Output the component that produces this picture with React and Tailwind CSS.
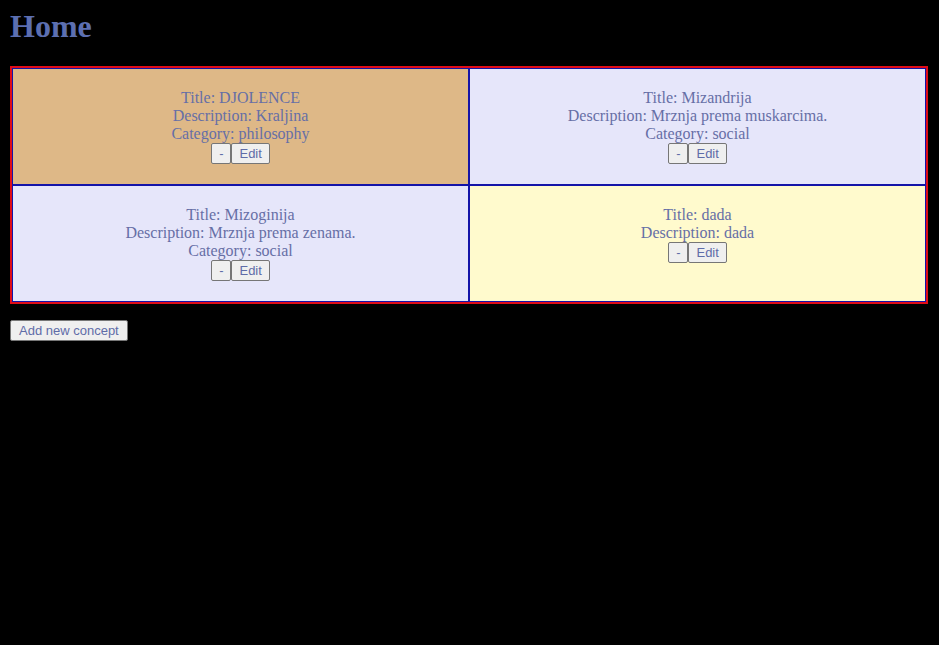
const concepts = [
  { title: 'DJOLENCE', description: 'Kraljina', category: 'philosophy', background: 'bg-[#deb887]' },
  { title: 'Mizandrija', description: 'Mrznja prema muskarcima.', category: 'social', background: 'bg-[#e6e6fa]' },
  { title: 'Mizoginija', description: 'Mrznja prema zenama.', category: 'social', background: 'bg-[#e6e6fa]' },
  { title: 'dada', description: 'dada', background: 'bg-[#fffacd]' },
];

function Button({ children, padding = 'px-[7px]', ...props }) {
  return (
    <button
      type="button"
      className={`rounded-[2px] border border-[#767676] bg-[#efefef] py-[2px] font-['Liberation_Sans',Arial,sans-serif] text-[13px] leading-[15px] text-[#5f6ca8] ${padding}`}
      {...props}
    >
      {children}
    </button>
  );
}

function Concept({ title, description, category, background }) {
  return (
    <article className={`border border-[#1414a8] p-5 text-center ${background}`}>
      <p>Title: {title}</p>
      <p>Description: {description}</p>
      {category && <p>Category: {category}</p>}
      <div className="flex justify-center">
        <Button aria-label={`Remove ${title}`}>-</Button>
        <Button>Edit</Button>
      </div>
    </article>
  );
}

export default function App() {
  return (
    <main className="min-h-screen bg-black pt-2 pr-[11px] pl-[10px] font-['Liberation_Serif','Times_New_Roman',serif] text-[16px] leading-[18px] text-[#666fa6]">
      <h1 className="mb-[22px] text-[32px] leading-[36px] font-bold text-[#5c6fb1]">Home</h1>
      <section className="mb-4 grid grid-cols-2 border-2 border-[#e00d18]">
        {concepts.map((concept) => (
          <Concept key={concept.title} {...concept} />
        ))}
      </section>
      <div className="flex">
        <Button padding="px-2">Add new concept</Button>
      </div>
    </main>
  );
}
